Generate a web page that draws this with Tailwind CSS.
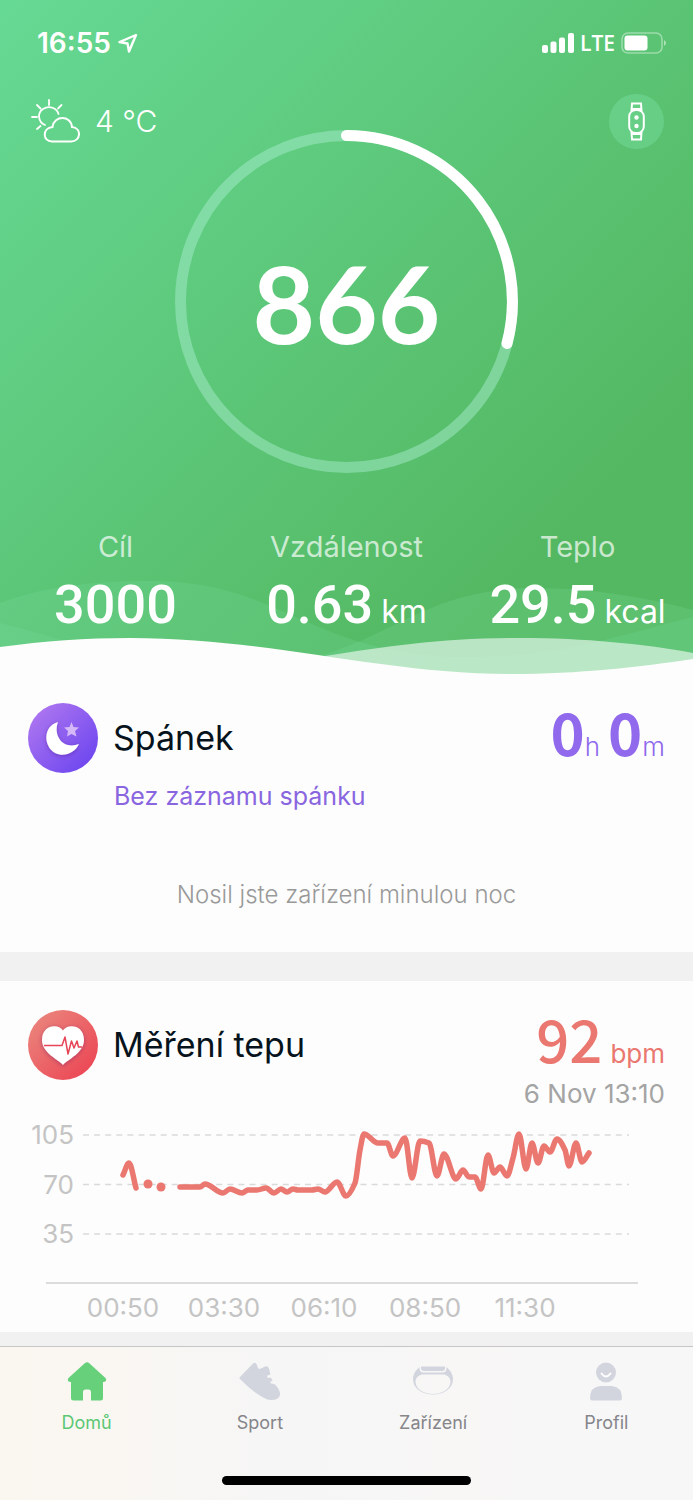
<!DOCTYPE html>
<html lang="cs">
<head>
<meta charset="utf-8">
<meta name="viewport" content="width=device-width, initial-scale=1">
<title>Domů</title>
<script src="https://cdn.jsdelivr.net/npm/@tailwindcss/browser@4"></script>
</head>
<body class="min-h-screen bg-[#fdfdfd] font-['Inter','Liberation_Sans',sans-serif] text-[#07131c]">
<main>
  <section class="relative bg-[linear-gradient(135deg,#66d994_0%,#54b862_80%,#54b862_100%)] pb-[41px] text-white">
    <svg class="absolute inset-x-0 bottom-0 h-[94px] w-full" viewBox="0 580 693 94" preserveAspectRatio="none" aria-hidden="true">
      <path d="M0 603C45 586 95 581 150 581C285 581 310 657 470 657C560 657 620 635 693 617V674H0Z" fill="#7be0a5" fill-opacity=".2"/>
      <path d="M0 623C60 637 110 660 190 666C380 680 390 588 535 588C590 588 645 597 693 610V674H0Z" fill="#7be0a5" fill-opacity=".2"/>
      <path d="M325 656C390 646 440 638 520 638C585 638 645 644 693 653V674H325Z" fill="#d4efdd" fill-opacity=".78"/>
      <path d="M0 647C45 641 85 638 130 638C270 638 380 674 510 674C580 674 640 667 693 659V675H0Z" fill="#fdfdfd"/>
    </svg>
    <div class="relative">
      <div class="flex items-center justify-between pt-[26px] pr-[26px] pl-[37px]">
        <div class="flex items-center gap-[7px]">
          <span class="text-[28px] leading-[34px] font-semibold">16:55</span>
          <svg class="size-5" viewBox="0 0 20 20" fill="none" stroke="white" stroke-width="2.400" stroke-linejoin="round" aria-hidden="true"><path d="M18 2L1.500 9L9.500 10.500L11 18.500Z"/></svg>
        </div>
        <div class="flex items-center gap-[6px]">
          <svg class="h-5 w-8" viewBox="0 0 32 20" fill="white" aria-hidden="true"><rect y="12" width="6" height="8" rx="2"/><rect x="8.500" y="8.500" width="6" height="11.500" rx="2"/><rect x="17" y="4.500" width="6" height="15.500" rx="2"/><rect x="26" width="6" height="20" rx="2"/></svg>
          <span class="font-['Open_Sans'] text-[21px] leading-[34px] font-semibold">LTE</span>
          <svg class="h-[22px] w-[46px]" viewBox="0 0 46 22" aria-hidden="true"><rect x="1" y="1" width="40" height="20" rx="6" fill="none" stroke="white" stroke-opacity=".4" stroke-width="1.600"/><rect x="3.500" y="3.500" width="23" height="15" rx="3" fill="white"/><path d="M43 8Q47 11 43 14Z" fill="white" fill-opacity=".5"/></svg>
        </div>
      </div>
      <div class="mt-[33px] flex h-14 items-center justify-between pr-[29px] pl-[30px]">
        <div class="flex items-center gap-[15px]">
          <svg class="h-[46px] w-[50px]" viewBox="0 0 50 46" fill="none" stroke="white" stroke-width="1.800" stroke-linecap="round" aria-hidden="true"><path d="M19 2V7M7 7L10.500 10.500M31.500 7L28 10.500M2 19H7M7 31L10.500 28M15 27C8 24 7 15 13 11C19 7 27 10 28.500 16"/><path d="M22 43.500H41C51 43.500 52 30 42 29C41 17 24 17 22.500 29C12 30 12.500 43.500 22 43.500Z" stroke-width="2"/></svg>
          <span class="text-[30px] leading-9 font-light">4 °C</span>
        </div>
        <button type="button" aria-label="Zařízení" class="flex size-[55px] items-center justify-center rounded-full bg-[#7be0a5]/40">
          <svg class="h-[39px] w-[17px]" viewBox="0 0 17 39" fill="none" stroke="white" stroke-width="2" aria-hidden="true"><path d="M3.500 9L4 1.500H13L13.500 9M3.500 30L4 37.500H13L13.500 30M4 7H13M4 32H13"/><rect x="1.200" y="8" width="14.600" height="23" rx="6.500"/><circle cx="8.500" cy="15.500" r="2.200" fill="white" stroke="none"/><circle cx="8.500" cy="24" r="2.200" fill="white" stroke="none"/></svg>
        </button>
      </div>
      <div class="mx-auto -mt-[19px] grid size-[343px] place-items-center">
        <svg class="col-start-1 row-start-1 size-full" viewBox="0 0 343 343" fill="none" stroke-width="11" aria-hidden="true"><circle cx="171.500" cy="171.500" r="166" stroke="#a5ecca" stroke-opacity=".5"/><path d="M171.500 5.500A166 166 0 0 1 332 213.500" stroke="white" stroke-linecap="round"/></svg>
        <span class="col-start-1 row-start-1 font-['Lato',sans-serif] text-[108px] leading-none font-bold">866</span>
      </div>
      <dl class="mt-[54px] grid grid-cols-3 text-center">
        <div>
          <dt class="text-[29px] leading-10 text-white/70">Cíl</dt>
          <dd class="flex h-[66px] items-baseline justify-center pt-[6px]"><span class="font-['Roboto',sans-serif] text-[54px] leading-[64px] font-medium">3000</span></dd>
        </div>
        <div>
          <dt class="text-[29px] leading-10 text-white/70">Vzdálenost</dt>
          <dd class="flex h-[66px] items-baseline justify-center gap-2 pt-[6px]"><span class="font-['Roboto',sans-serif] text-[54px] leading-[64px] font-medium">0.63</span><span class="text-[32px] leading-10">km</span></dd>
        </div>
        <div>
          <dt class="text-[29px] leading-10 text-white/70">Teplo</dt>
          <dd class="flex h-[66px] items-baseline justify-center gap-2 pt-[6px]"><span class="font-['Roboto',sans-serif] text-[54px] leading-[64px] font-medium">29.5</span><span class="text-[32px] leading-10">kcal</span></dd>
        </div>
      </dl>
    </div>
  </section>

  <section class="px-7 pt-[29px] pb-10">
    <div class="flex h-[70px] items-center">
      <svg class="size-[70px]" viewBox="0 0 70 70" aria-hidden="true">
        <defs><linearGradient id="violet" x1="0" y1="0" x2="1" y2="1"><stop stop-color="#b57cf0"/><stop offset="1" stop-color="#6540ef"/></linearGradient><filter id="soft" x="-30%" y="-30%" width="160%" height="160%"><feDropShadow dx="0" dy="1" stdDeviation="2" flood-color="#40106a" flood-opacity=".35"/></filter></defs>
        <circle cx="35" cy="35" r="35" fill="url(#violet)"/>
        <path d="M30 19C15 23 15 43 27 50C36 54.500 47 50 51 41C43 44 35 42 31.500 36C28 31 28 24 30 19Z" fill="white" filter="url(#soft)"/>
        <path d="M43.500 19L45.500 24L51 24.500L47 28L48.500 33.500L43.500 31L39 33.500L40 28L36 24.500L41.500 24Z" fill="#d5b8f8"/>
      </svg>
      <h2 class="ml-[15px] text-[34px] leading-[42px]">Spánek</h2>
      <p class="ml-auto flex items-baseline pb-3 text-[26px] font-light text-[#9069ed]"><span class="font-['Noto_Sans_CJK_JP',sans-serif] text-[58px] leading-[60px] font-bold">0</span><span class="mr-2 leading-8">h</span><span class="font-['Noto_Sans_CJK_JP',sans-serif] text-[58px] leading-[60px] font-bold">0</span><span class="leading-8">m</span></p>
    </div>
    <p class="mt-[7px] ml-[86px] text-[25px] leading-8 text-[#8965e0]">Bez záznamu spánku</p>
    <p class="mt-[66px] text-center text-[24px] leading-[34px] font-light text-[#999999]">Nosil jste zařízení minulou noc</p>
  </section>

  <section class="border-t-[29px] border-[#f1f1f1] pt-[29px]">
    <div class="flex h-[70px] items-center px-7">
      <svg class="size-[70px]" viewBox="0 0 70 70" aria-hidden="true">
        <defs><linearGradient id="rose" x1="0" y1="0" x2="1" y2="1"><stop stop-color="#ea8b80"/><stop offset="1" stop-color="#ec3f50"/></linearGradient></defs>
        <circle cx="35" cy="35" r="35" fill="url(#rose)"/>
        <path d="M35 20.500C40 13 56 15 56 30C56 43 40 49 35 55C30 49 14 43 14 30C14 15 30 13 35 20.500Z" fill="white" filter="url(#soft)"/>
        <path d="M16 35.500H34L37 27L40 44L43.500 31L46 38L49 31L50.500 37H54" fill="none" stroke="#e64557" stroke-width="1.500" stroke-linejoin="round"/>
      </svg>
      <h2 class="ml-[15px] text-[34px] leading-[42px]">Měření tepu</h2>
      <p class="ml-auto flex items-baseline gap-2 pb-3 text-[26px] text-[#ea7770]"><span class="font-['Noto_Sans_CJK_JP',sans-serif] text-[58px] leading-[60px] font-medium">92</span><span class="leading-8">bpm</span></p>
    </div>
    <p class="px-7 pb-0.5 text-right text-[26px] leading-7 text-[#a4a4a4]">6 Nov 13:10</p>
    <svg class="block w-full" viewBox="0 1110 693 222" role="img" aria-label="Měření tepu">
      <g stroke="#dadada" stroke-width="1.500"><path d="M83 1135H629M83 1184.500H629M83 1234H629" stroke-dasharray="6 5.100"/><path d="M46 1283H638" stroke="#d0d0d0"/></g>
      <g class="text-[26px]" fill="#c4c4c4" text-anchor="end"><text x="74" y="1144">105</text><text x="74" y="1194">70</text><text x="74" y="1243">35</text></g>
      <g class="text-[26px]" fill="#c4c4c4" text-anchor="middle"><text x="123" y="1317">00:50</text><text x="224" y="1317">03:30</text><text x="324" y="1317">06:10</text><text x="425" y="1317">08:50</text><text x="525" y="1317">11:30</text></g>
      <g fill="#ea7770"><circle cx="148" cy="1184" r="4.500"/><circle cx="161" cy="1187" r="4.500"/></g>
      <path id="pulse" fill="none" stroke="#ea7770" stroke-width="5.500" stroke-linecap="round" stroke-linejoin="round"/>
    </svg>
  </section>
</main>

<nav class="border-t-[14px] border-[#f1f1f1]">
  <div class="border-t border-[#c6c6c6] bg-[linear-gradient(90deg,#faf6f0_0%,#faf7f2_15%,#f6f6f7_42%,#f8f7f6_65%,#f7f7f8_100%)]">
    <div class="grid grid-cols-4 pt-[14px] text-center text-[18px] leading-6 text-[#85858a]">
      <a href="#domu" aria-current="page" class="flex flex-col items-center gap-[10px] text-[#5cc874]">
        <svg class="size-[40px]" viewBox="0 0 40 40" fill="#66d07a" aria-hidden="true"><path d="M18 2Q20 .5 22 2L38.500 17Q40.500 20 37 21H36V37Q36 39.500 33.500 39.500H24V31Q24 28.500 22 28.500H18.500Q16 28.500 16 31V39.500H6.500Q4 39.500 4 37V21H3Q-.5 20 1.500 17Z"/></svg>Domů</a>
      <a href="#sport" class="flex flex-col items-center gap-[10px]">
        <svg class="h-[40px] w-[42px]" viewBox="0 0 42 40" fill="#d2d5de" aria-hidden="true"><path d="M1 18Q0 17 1 16L14 2.500Q16 1 17.500 3L19 7Q20 8.500 22 7.500L26 5.500Q29 4.500 30 7.500L31.500 13.500L28.500 14.500Q27.500 17 30 17L32 16.500L33.500 20L31.500 20.500Q31 23 33 22.500L36 23.500Q41.500 29 41 34Q40 39 32 39C24 39 10 27 1 18Z"/></svg>Sport</a>
      <a href="#zarizeni" class="flex flex-col items-center gap-[10px]">
        <svg class="h-[40px] w-[42px]" viewBox="0 0 42 40" fill="#d2d5de" aria-hidden="true"><path d="M9 5.500H33V7Q33 10 30 10H12Q9 10 9 7Z"/><path fill-rule="evenodd" d="M7.500 6C4 9 1 13 1 18C1 28 11 33.500 21 33.500S41 28 41 18C41 13 38 9 34.500 6V8Q34 11.500 30.500 11.500H11.500Q8 11.500 7.500 8ZM9.500 13.500H32.500C37 15 38.500 18 38.500 21C38 29 29 33 21 33S4 29 3.500 21C3.500 18 5 15 9.500 13.500Z"/></svg>Zařízení</a>
      <a href="#profil" class="flex flex-col items-center gap-[10px]">
        <svg class="h-[40px] w-[36px]" viewBox="0 0 36 40" fill="#d2d5de" aria-hidden="true"><circle cx="18" cy="11.500" r="10"/><path d="M13.500 12.500Q18 18.500 22.500 12.500" fill="none" stroke="white" stroke-width="2" stroke-linecap="round"/><path d="M12 25H24Q34 26 34 37Q34 39.500 32 39.500H4Q2 39.500 2 37Q2 26 12 25Z"/></svg>Profil</a>
    </div>
    <div class="pt-[41px] pb-[15px]"><div class="mx-auto h-[9px] w-[36%] rounded-full bg-black"></div></div>
  </div>
</nav>

<script>
  // Heart-rate samples as [x, y], one list per unbroken run.
  const runs = [
    [[123,1175],[129,1163],[136,1188]],
    [[180,1187],[200,1187],[205,1184],[223,1193],[230,1189],[242,1193],[248,1190],[257,1190],[266,1188],[274,1193],[281,1189],[287,1192],[293,1189],[298,1190],[312,1190],[318,1189],[325,1192],[337,1182],[346,1196],[355,1183],[360,1150],[364,1134],[378,1143],[387,1143],[393,1156],[405,1138],[412,1178],[420,1141],[429,1143],[437,1176],[444,1154],[456,1179],[463,1170],[469,1177],[475,1177],[481,1189],[488,1155],[494,1173],[500,1167],[507,1176],[513,1158],[519,1134],[526,1169],[532,1143],[538,1163],[544,1146],[550,1152],[557,1139],[565,1150],[569,1166],[576,1143],[582,1162],[589,1153]]
  ];
  // Tangents are flat at peaks and troughs so the curve never overshoots a sample.
  const curve = (p) => {
    const s = p.slice(1).map((q, i) => (q[1] - p[i][1]) / (q[0] - p[i][0]));
    const m = p.map((_, i) => i === 0 ? s[0] : i === p.length - 1 ? s[i - 1]
      : s[i - 1] * s[i] <= 0 ? 0 : 2 * s[i - 1] * s[i] / (s[i - 1] + s[i]));
    return p.map((q, i) => {
      if (i === 0) return `M${q}`;
      const a = p[i - 1], h = (q[0] - a[0]) / 3;
      return `C${a[0] + h} ${a[1] + h * m[i - 1]} ${q[0] - h} ${q[1] - h * m[i]} ${q}`;
    }).join('');
  };
  document.getElementById('pulse').setAttribute('d', runs.map(curve).join(''));
</script>
</body>
</html>
